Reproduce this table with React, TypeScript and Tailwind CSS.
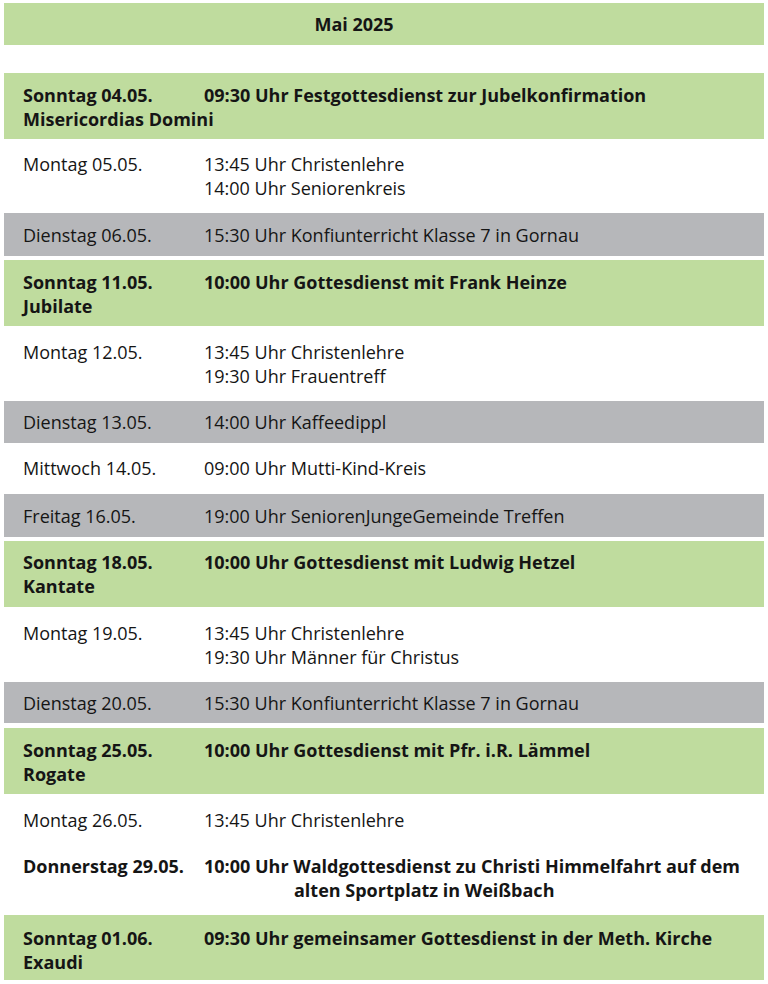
import React from "react";

type Row = {
  kind: "green" | "white" | "gray" | "gap";
  cls?: string;
  bold?: boolean;
  date?: string;
  sub?: string;
  events?: string[];
  cont?: string;
};

const rows: Row[] = [
  { kind: "green", cls: "h-[66px] pt-[11px]", bold: true, date: "Sonntag 04.05.", sub: "Misericordias Domini", events: ["09:30 Uhr Festgottesdienst zur Jubelkonfirmation"] },
  { kind: "white", cls: "h-[74px] pt-[14px]", date: "Montag 05.05.", events: ["13:45 Uhr Christenlehre", "14:00 Uhr Seniorenkreis"] },
  { kind: "gray", cls: "h-[43px] pt-[11px]", date: "Dienstag 06.05.", events: ["15:30 Uhr Konfiunterricht Klasse 7 in Gornau"] },
  { kind: "gap", cls: "h-[4px]" },
  { kind: "green", cls: "h-[66px] pt-[11px]", bold: true, date: "Sonntag 11.05.", sub: "Jubilate", events: ["10:00 Uhr Gottesdienst mit Frank Heinze"] },
  { kind: "white", cls: "h-[75px] pt-[15px]", date: "Montag 12.05.", events: ["13:45 Uhr Christenlehre", "19:30 Uhr Frauentreff"] },
  { kind: "gray", cls: "h-[42px] pt-[10px]", date: "Dienstag 13.05.", events: ["14:00 Uhr Kaffeedippl"] },
  { kind: "white", cls: "h-[51px] pt-[14px]", date: "Mittwoch 14.05.", events: ["09:00 Uhr Mutti-Kind-Kreis"] },
  { kind: "gray", cls: "h-[43px] pt-[11px]", date: "Freitag 16.05.", events: ["19:00 Uhr SeniorenJungeGemeinde Treffen"] },
  { kind: "gap", cls: "h-[4px]" },
  { kind: "green", cls: "h-[66px] pt-[10px]", bold: true, date: "Sonntag 18.05.", sub: "Kantate", events: ["10:00 Uhr Gottesdienst mit Ludwig Hetzel"] },
  { kind: "white", cls: "h-[75px] pt-[15px]", date: "Montag 19.05.", events: ["13:45 Uhr Christenlehre", "19:30 Uhr Männer für Christus"] },
  { kind: "gray", cls: "h-[41px] pt-[10px]", date: "Dienstag 20.05.", events: ["15:30 Uhr Konfiunterricht Klasse 7 in Gornau"] },
  { kind: "gap", cls: "h-[5px]" },
  { kind: "green", cls: "h-[66px] pt-[11px]", bold: true, date: "Sonntag 25.05.", sub: "Rogate", events: ["10:00 Uhr Gottesdienst mit Pfr. i.R. Lämmel"] },
  { kind: "white", cls: "h-[49px] pt-[15px]", date: "Montag 26.05.", events: ["13:45 Uhr Christenlehre"] },
  { kind: "white", cls: "h-[70px] pt-[12px]", bold: true, date: "Donnerstag 29.05.", events: ["10:00 Uhr Waldgottesdienst zu Christi Himmelfahrt auf dem"], cont: "alten Sportplatz in Weißbach" },
  { kind: "gap", cls: "h-[2px]" },
  { kind: "green", cls: "h-[65px] pt-[12px]", bold: true, date: "Sonntag 01.06.", sub: "Exaudi", events: ["09:30 Uhr gemeinsamer Gottesdienst in der Meth. Kirche"] },
];

function RowView({ r }: { r: Row }) {
  if (r.kind === "gap") return <div className={r.cls} />;
  const bg =
    r.kind === "green" ? "bg-[#bfdc9e]" : r.kind === "gray" ? "bg-[#b6b7ba]" : "bg-white";
  const weight = r.bold ? "font-bold" : "font-normal";
  return (
    <div className={`mx-[4px] pl-[19px] ${bg} ${r.cls} ${weight}`}>
      <div className="flex">
        <div className="w-[181px] shrink-0 whitespace-nowrap">
          <div>{r.date}</div>
          {r.sub && <div>{r.sub}</div>}
        </div>
        <div className="whitespace-nowrap">
          {r.events?.map((e) => (
            <div key={e}>{e}</div>
          ))}
          {r.cont && <div className="pl-[90px]">{r.cont}</div>}
        </div>
      </div>
    </div>
  );
}

export default function App() {
  return (
    <div
      className="w-[768px] h-[984px] bg-white text-[#151515] text-[18px] leading-[23.5px] overflow-hidden"
      style={{ fontFamily: '"Open Sans", "Noto Sans", sans-serif' }}
    >
      <div className="h-[3px]" />
      <div className="mx-[4px] h-[42px] bg-[#bfdc9e] flex items-center justify-center pr-[60px] pt-[2px] font-bold">
        Mai 2025
      </div>
      <div className="h-[28px]" />
      {rows.map((r, i) => (
        <RowView key={i} r={r} />
      ))}
    </div>
  );
}
